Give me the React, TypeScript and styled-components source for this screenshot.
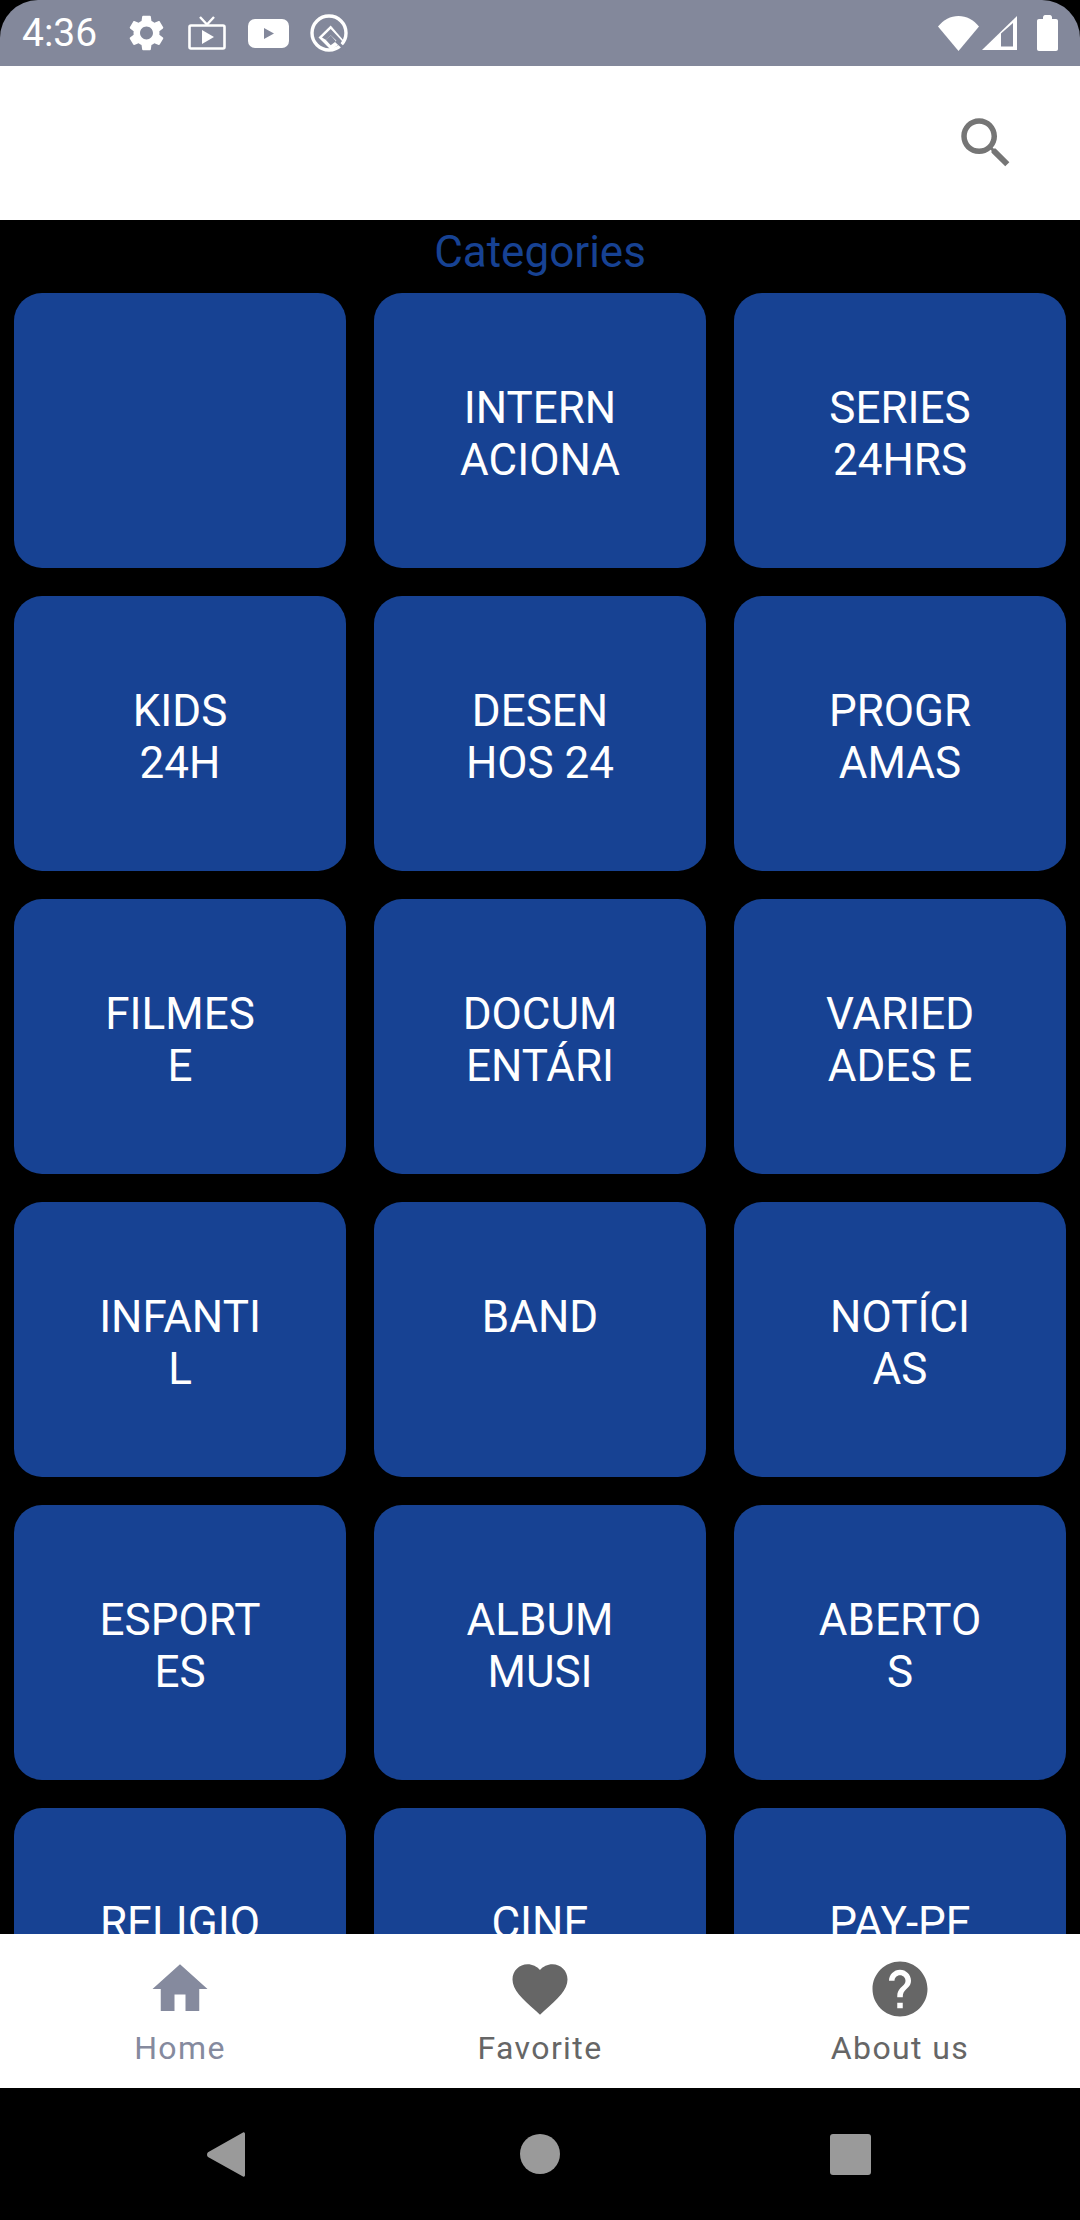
import React from "react";
import styled, { createGlobalStyle } from "styled-components";

const GlobalStyle = createGlobalStyle`
  html, body {
    margin: 0;
    padding: 0;
    background: #000;
    font-family: Roboto, "Liberation Sans", sans-serif;
  }
`;

const categories: string[][] = [
  [],
  ["INTERN", "ACIONA"],
  ["SERIES", "24HRS"],
  ["KIDS", "24H"],
  ["DESEN", "HOS 24"],
  ["PROGR", "AMAS"],
  ["FILMES", "E"],
  ["DOCUM", "ENTÁRI"],
  ["VARIED", "ADES E"],
  ["INFANTI", "L"],
  ["BAND"],
  ["NOTÍCI", "AS"],
  ["ESPORT", "ES"],
  ["ALBUM", "MUSI"],
  ["ABERTO", "S"],
  ["RELIGIO"],
  ["CINE"],
  ["PAY-PE"],
];

const HOME = "M10 20v-6h4v6h5v-8h3L12 3 2 12h3v8z";
const HEART =
  "M12 21.35l-1.45-1.32C5.4 15.36 2 12.28 2 8.5 2 5.42 4.42 3 7.5 3c1.74 0 3.41.81 4.5 2.09C13.09 3.81 14.76 3 16.5 3 19.58 3 22 5.42 22 8.5c0 3.78-3.4 6.86-8.55 11.54L12 21.35z";
const HELP =
  "M12 2C6.48 2 2 6.48 2 12s4.48 10 10 10 10-4.48 10-10S17.52 2 12 2zm1 17h-2v-2h2v2zm2.07-7.75l-.9.92C13.45 12.9 13 13.5 13 15h-2v-.5c0-1.1.45-2.1 1.17-2.83l1.24-1.26c.37-.36.59-.86.59-1.41 0-1.1-.9-2-2-2s-2 .9-2 2H8c0-2.21 1.79-4 4-4s4 1.79 4 4c0 .88-.36 1.68-.93 2.25z";
const SEARCH =
  "M15.5 14h-.79l-.28-.27C15.41 12.59 16 11.11 16 9.5 16 5.91 13.09 3 9.5 3S3 5.91 3 9.5 5.91 16 9.5 16c1.61 0 3.09-.59 4.23-1.57l.27.28v.79l5 4.99L20.49 19l-4.99-5zm-6 0C7.01 14 5 11.99 5 9.5S7.01 5 9.5 5 14 7.01 14 9.5 11.99 14 9.5 14z";
const GEAR =
  "M19.14 12.94c.04-.3.06-.61.06-.94 0-.32-.02-.64-.07-.94l2.03-1.58c.18-.14.23-.41.12-.61l-1.92-3.32c-.12-.22-.37-.29-.59-.22l-2.39.96c-.5-.38-1.03-.7-1.62-.94l-.36-2.54c-.04-.24-.24-.41-.48-.41h-3.84c-.24 0-.43.17-.47.41l-.36 2.54c-.59.24-1.13.57-1.62.94l-2.39-.96c-.22-.08-.47 0-.59.22L2.74 8.87c-.12.21-.08.47.12.61l2.03 1.58c-.05.3-.09.63-.09.94s.02.64.07.94l-2.03 1.58c-.18.14-.23.41-.12.61l1.92 3.32c.12.22.37.29.59.22l2.39-.96c.5.38 1.03.7 1.62.94l.36 2.54c.05.24.24.41.48.41h3.84c.24 0 .44-.17.47-.41l.36-2.54c.59-.24 1.13-.56 1.62-.94l2.39.96c.22.08.47 0 .59-.22l1.92-3.32c.12-.22.07-.47-.12-.61l-2.01-1.58zM12 15.6c-1.98 0-3.6-1.62-3.6-3.6s1.62-3.6 3.6-3.6 3.6 1.62 3.6 3.6-1.62 3.6-3.6 3.6z";

const App = () => {
  return (
    <Screen>
      <GlobalStyle />
      <StatusBar>
        <Time>4:36</Time>
        <GearIcon width="35" height="36" viewBox="2.6 2 18.8 20">
          <path d={GEAR} fill="#fff" />
        </GearIcon>
        <TvIcon width="38" height="34" viewBox="0 0 38 34">
          <rect x="1.5" y="9.5" width="35" height="23" rx="1.5" fill="none" stroke="#fff" strokeWidth="2.6" />
          <path d="M12 1l7 7.5L26 1" fill="none" stroke="#fff" strokeWidth="2.4" />
          <path d="M14 14v14l12-7z" fill="#fff" />
        </TvIcon>
        <YoutubeIcon width="41" height="29" viewBox="0 0 41 29">
          <rect width="41" height="29" rx="7" fill="#fff" />
          <path d="M16 9v11l10-5.5z" fill="#83889b" />
        </YoutubeIcon>
        <QIcon width="38" height="38" viewBox="0 0 38 38">
          <circle cx="19" cy="19" r="17" fill="none" stroke="#fff" strokeWidth="3.4" />
          <path d="M20.700 11.500L8.500 23.500 21 36l13-9z" fill="#fff" />
          <path d="M20.700 15L12 23.500 15.700 25.700 20.700 21.300 30 30 32 27z" fill="#83889b" />
          <path d="M20.700 21.300L15.700 25.700l5 5.600 5.300-4z" fill="#83889b" />
          <path d="M26 27l12 11" stroke="#83889b" strokeWidth="3" />
        </QIcon>
        <StatusRight>
          <svg width="41" height="35" viewBox="0 0 41 35">
            <path d="M20.500 35L0 10.500C5.500 4 12.500 0 20.500 0S35.500 4 41 10.500z" fill="#fff" />
          </svg>
          <SignalIcon width="35" height="34" viewBox="0 0 35 34">
            <path d="M0 34L35 0v34z" fill="#fff" />
            <path d="M19 17.500L31 7v23.500H19z" fill="#83889b" />
          </SignalIcon>
          <BatteryIcon width="21" height="36" viewBox="0 0 21 36">
            <path d="M6 2.500C6 1 7 0 8 0h5c1 0 2 1 2 2.500V4h4c1.200 0 2 .8 2 2v28c0 1.200-.8 2-2 2H2c-1.200 0-2-.8-2-2V6c0-1.200.8-2 2-2h4z" fill="#fff" />
          </BatteryIcon>
        </StatusRight>
      </StatusBar>

      <AppBar>
        <svg width="66" height="66" viewBox="0 0 24 24">
          <path d={SEARCH} fill="#757575" />
        </svg>
      </AppBar>

      <Content>
        <Title>Categories</Title>
        <Grid>
          {categories.map((lines, i) => (
            <Card key={i}>
              {lines.map((line) => (
                <CardLine key={line}>{line}</CardLine>
              ))}
            </Card>
          ))}
        </Grid>
      </Content>

      <TabBar>
        <Tab $color="#858a9e">
          <svg width="66" height="66" viewBox="0 0 24 24">
            <path d={HOME} fill="currentColor" />
          </svg>
          <TabLabel>Home</TabLabel>
        </Tab>
        <Tab $color="#666">
          <svg width="66" height="66" viewBox="0 0 24 24">
            <path d={HEART} fill="currentColor" />
          </svg>
          <TabLabel>Favorite</TabLabel>
        </Tab>
        <Tab $color="#666">
          <svg width="66" height="66" viewBox="0 0 24 24">
            <path d={HELP} fill="currentColor" />
          </svg>
          <TabLabel>About us</TabLabel>
        </Tab>
      </TabBar>

      <NavBar>
        <svg width="38" height="45" viewBox="0 0 38 45">
          <path d="M36 0.500c1.200-.6 2 .2 2 1.500v41c0 1.400-.9 2.100-2 1.400L1 25c-1.300-1.200-1.300-3.500 0-4.700z" fill="#9a9a9a" />
        </svg>
        <NavCircle width="40" height="40" viewBox="0 0 40 40">
          <circle cx="20" cy="20" r="20" fill="#9a9a9a" />
        </NavCircle>
        <svg width="41" height="41" viewBox="0 0 41 41">
          <rect width="41" height="41" rx="3" fill="#9a9a9a" />
        </svg>
      </NavBar>
    </Screen>
  );
};

const Screen = styled.div`
  width: 1080px;
  height: 2220px;
  display: flex;
  flex-direction: column;
  background: #000;
  overflow: hidden;
`;

const StatusBar = styled.div`
  height: 66px;
  flex-shrink: 0;
  display: flex;
  align-items: center;
  padding: 0 22px;
  background: #83889b;
  border-radius: 38px 38px 0 0;
  color: #fff;
`;

const Time = styled.span`
  font-size: 39px;
  font-weight: 400;
  width: 70px;
  margin-right: 37px;
`;

const GearIcon = styled.svg`
  margin-right: 24px;
`;

const TvIcon = styled.svg`
  margin-right: 22px;
`;

const YoutubeIcon = styled.svg`
  margin-right: 21px;
`;

const QIcon = styled.svg``;

const StatusRight = styled.div`
  margin-left: auto;
  display: flex;
  align-items: center;
`;

const SignalIcon = styled.svg`
  margin-left: 3px;
`;

const BatteryIcon = styled.svg`
  margin-left: 20px;
`;

const AppBar = styled.div`
  height: 154px;
  flex-shrink: 0;
  display: flex;
  align-items: center;
  justify-content: flex-end;
  padding-right: 61px;
  background: #fff;
`;

const Content = styled.div`
  flex: 1;
  min-height: 0;
  overflow: hidden;
  background: #000;
`;

const Title = styled.div`
  height: 73px;
  padding-top: 2px;
  box-sizing: border-box;
  text-align: center;
  font-size: 44px;
  line-height: 60px;
  color: #174293;
`;

const Grid = styled.div`
  display: grid;
  grid-template-columns: repeat(3, 332px);
  grid-auto-rows: 275px;
  gap: 28px;
  padding: 0 14px;
`;

const Card = styled.div`
  background: #174293;
  border-radius: 28px;
  padding-top: 89px;
  box-sizing: border-box;
  text-align: center;
  color: #fff;
  font-size: 44px;
  line-height: 52px;
`;

const CardLine = styled.div``;

const TabBar = styled.div`
  height: 154px;
  flex-shrink: 0;
  display: grid;
  grid-template-columns: repeat(3, 1fr);
  background: #fff;
`;

const Tab = styled.div<{ $color: string }>`
  display: flex;
  flex-direction: column;
  align-items: center;
  padding-top: 22px;
  color: ${({ $color }) => $color};
`;

const TabLabel = styled.span`
  font-size: 32px;
  line-height: 36px;
  letter-spacing: 1.4px;
  margin-top: 8px;
`;

const NavBar = styled.div`
  height: 132px;
  flex-shrink: 0;
  display: flex;
  align-items: center;
  padding-left: 207px;
  background: #000;
`;

const NavCircle = styled.svg`
  margin: 0 270px 0 275px;
`;

export default App;
